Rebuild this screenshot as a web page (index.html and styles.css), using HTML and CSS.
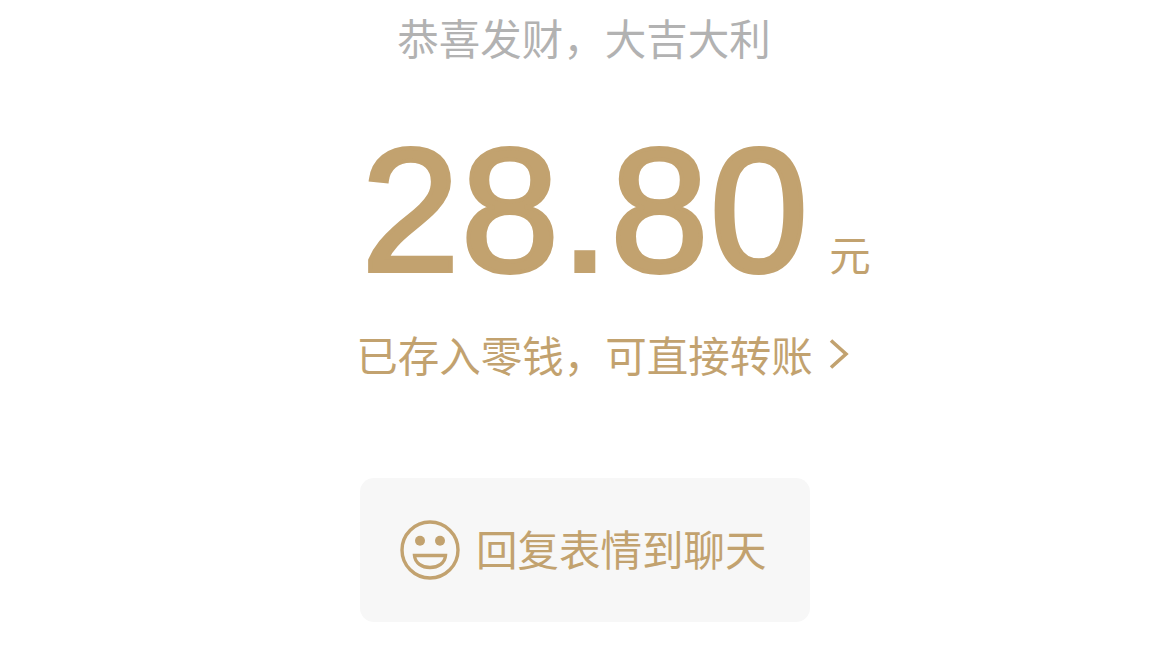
FILE: index.html
```html
<!DOCTYPE html>
<html lang="zh-CN">
<head>
    <meta charset="UTF-8">
    <meta name="viewport" content="width=device-width, initial-scale=1.0">
    <title>红包详情</title>
    <link rel="stylesheet" href="styles.css">
</head>
<body>
    <div class="packet">
        <p class="wish">恭喜发财，大吉大利</p>

        <div class="amount">
            <span class="amount-num">28.80</span>
            <span class="amount-unit">元</span>
        </div>

        <a class="change-link">
            <span>已存入零钱，可直接转账</span>
            <svg class="chevron" width="20" height="32" viewBox="0 0 20 32">
                <path d="M2 2.5 L17 16 L2 29.5" fill="none" stroke="#c2a26f" stroke-width="3.6"/>
            </svg>
        </a>

        <button class="reply-btn">
            <svg class="smile" width="60" height="60" viewBox="0 0 60 60">
                <circle cx="30" cy="30" r="28" fill="none" stroke="#c2a26f" stroke-width="3.4"/>
                <circle cx="20" cy="20.7" r="5" fill="#c2a26f"/>
                <circle cx="40" cy="20.7" r="5" fill="#c2a26f"/>
                <path d="M14.5 35.5 H45.5 C45 43 38 47.5 30 47.5 C22 47.5 15 43 14.5 35.5 Z" fill="none" stroke="#c2a26f" stroke-width="3.4"/>
            </svg>
            <span class="reply-text">回复表情到聊天</span>
        </button>
    </div>
</body>
</html>
```

FILE: styles.css
```css
body {
    margin: 0;
    background: #fff;
    font-family: "Noto Sans CJK SC", "Noto Sans", sans-serif;
}
.packet {
    width: 1170px;
    height: 669px;
    overflow: hidden;
    display: flex;
    flex-direction: column;
    align-items: center;
}
.wish {
    margin: 7px 0 0 -2px;
    font-size: 41.5px;
    line-height: 60px;
    font-weight: 400;
    color: #b2b2b2;
}
.amount {
    display: flex;
    align-items: baseline;
    margin: 68px 0 0 0;
    height: 150px;
    color: #c2a26f;
}
.amount-num {
    font-family: "Liberation Sans", sans-serif;
    font-size: 177px;
    line-height: 150px;
    letter-spacing: 1px;
    -webkit-text-stroke: 4px #c2a26f;
}
.amount-unit {
    font-size: 41.5px;
    font-weight: 400;
    margin-left: 20px;
    margin-right: -62px;
}
.change-link {
    display: flex;
    align-items: center;
    gap: 16px;
    margin: 39px 0 0 35px;
    font-size: 41.5px;
    line-height: 60px;
    font-weight: 400;
    color: #c2a26f;
}
.reply-btn {
    display: flex;
    align-items: center;
    gap: 16px;
    box-sizing: border-box;
    width: 450px;
    height: 144px;
    margin-top: 94px;
    padding: 0 0 0 40px;
    border: 0;
    border-radius: 14px;
    background: #f7f7f7;
    font-family: inherit;
    font-size: 41.5px;
    font-weight: 400;
    color: #c2a26f;
}
.reply-text {
    margin-bottom: 4px;
}
```
